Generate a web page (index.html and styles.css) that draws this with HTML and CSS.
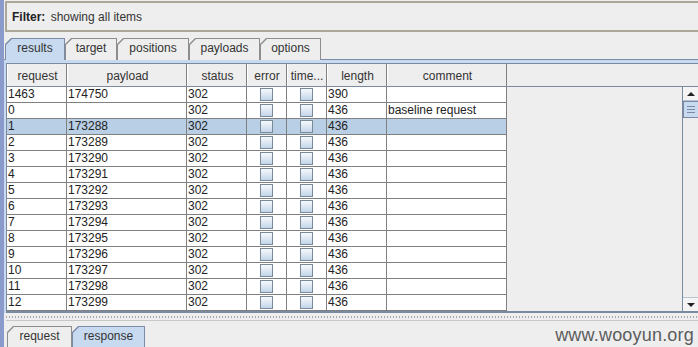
FILE: index.html
```html
<!DOCTYPE html>
<html lang="en">
<head>
    <meta charset="UTF-8">
    <title>Intruder attack results</title>
    <link rel="stylesheet" href="styles.css">
</head>
<body>
    <div class="window">
        <div class="filter"><b>Filter:</b> showing all items</div>

        <div class="tabs top-tabs">
            <div class="tab active w-results"><span>results</span></div>
            <div class="tab w-target"><span>target</span></div>
            <div class="tab w-positions"><span>positions</span></div>
            <div class="tab w-payloads"><span>payloads</span></div>
            <div class="tab w-options"><span>options</span></div>
        </div>

        <div class="panel">
            <div class="pane">
                <div class="row head">
                    <div class="c c-req">request</div>
                    <div class="c c-pay">payload</div>
                    <div class="c c-st">status</div>
                    <div class="c c-err">error</div>
                    <div class="c c-time">time...</div>
                    <div class="c c-len">length</div>
                    <div class="c c-com">comment</div>
                </div>
                <div class="pane-body">
                    <div class="rows" id="rows"></div>
                    <div class="fill"></div>
                    <div class="vscroll">
                        <div class="sb-btn up"></div>
                        <div class="sb-thumb"><i></i><i></i><i></i></div>
                        <div class="sb-track"></div>
                        <div class="sb-btn down"></div>
                    </div>
                </div>
            </div>
        </div>

        <div class="splitter"><div class="dots"></div></div>

        <div class="tabs bottom-tabs">
            <div class="tab w-request"><span>request</span></div>
            <div class="tab active w-response"><span>response</span></div>
        </div>
        <div class="bottom-panel"></div>

        <div class="watermark">www.wooyun.org</div>
    </div>

    <script>
        // resultados do ataque
        const results = [
            { req: '1463', pay: '174750', st: '302', len: '390', com: '' },
            { req: '0', pay: '', st: '302', len: '436', com: 'baseline request' },
            { req: '1', pay: '173288', st: '302', len: '436', com: '', sel: true },
            { req: '2', pay: '173289', st: '302', len: '436', com: '' },
            { req: '3', pay: '173290', st: '302', len: '436', com: '' },
            { req: '4', pay: '173291', st: '302', len: '436', com: '' },
            { req: '5', pay: '173292', st: '302', len: '436', com: '' },
            { req: '6', pay: '173293', st: '302', len: '436', com: '' },
            { req: '7', pay: '173294', st: '302', len: '436', com: '' },
            { req: '8', pay: '173295', st: '302', len: '436', com: '' },
            { req: '9', pay: '173296', st: '302', len: '436', com: '' },
            { req: '10', pay: '173297', st: '302', len: '436', com: '' },
            { req: '11', pay: '173298', st: '302', len: '436', com: '' },
            { req: '12', pay: '173299', st: '302', len: '436', com: '' }
        ];

        const rows = document.getElementById('rows');
        results.forEach(r => {
            const row = document.createElement('div');
            row.className = r.sel ? 'row selected' : 'row';
            row.innerHTML = `
                <div class="c c-req">${r.req}</div>
                <div class="c c-pay">${r.pay}</div>
                <div class="c c-st">${r.st}</div>
                <div class="c c-err"><span class="check"></span></div>
                <div class="c c-time"><span class="check"></span></div>
                <div class="c c-len">${r.len}</div>
                <div class="c c-com">${r.com}</div>
            `;
            rows.appendChild(row);
        });
    </script>
</body>
</html>
```

FILE: styles.css
```css
html, body {
    margin: 0;
    padding: 0;
}

body {
    font-family: "Liberation Sans", Arial, sans-serif;
    font-size: 12px;
    color: #222;
    background-color: #eeeeee;
    overflow: hidden;
}

.window {
    position: relative;
    height: 347px;
    border-left: 4px solid #8a9acb;
    overflow: hidden;
}

/* filtro */
.filter {
    margin: 1px 0 0 1px;
    height: 27px;
    line-height: 29px;
    border-top: 2px solid #aca899;
    border-bottom: 2px solid #aca899;
    border-left: 2px solid #aca899;
    padding-left: 5px;
    color: #333;
    white-space: nowrap;
    overflow: hidden;
}

.filter b {
    color: #222;
    margin-right: 2px;
}

/* abas */
.tabs {
    display: flex;
    position: relative;
    z-index: 1;
}

.top-tabs {
    margin-top: 6px;
    padding-left: 1px;
    height: 22px;
    margin-bottom: -1px;
}

.tab {
    box-sizing: border-box;
    height: 22px;
    padding: 1px 1px 0 1px;
    background-color: #8d8d8d;
    clip-path: polygon(6px 0, 100% 0, 100% 100%, 0 100%, 0 6px);
}

.tab span {
    display: block;
    height: 21px;
    line-height: 19px;
    text-align: center;
    color: #333;
    background-color: #eeeeee;
    clip-path: polygon(6px 0, 100% 0, 100% 100%, 0 100%, 0 6px);
}

.tab.active {
    background-color: #7b8ba5;
}

.tab.active span {
    background-color: #c7daef;
}

.w-results { width: 60px; }
.w-target { width: 52px; }
.w-positions { width: 72px; }
.w-payloads { width: 71px; }
.w-options { width: 61px; }
.w-request { width: 65px; }
.w-response { width: 73px; }

.panel {
    border-top: 1px solid #7b8ba5;
    background-color: #c7daef;
    padding: 3px 0 0 2px;
}

.pane {
    border-top: 1px solid #7a8aa0;
    border-left: 1px solid #7a8aa0;
    border-bottom: 2px solid #7a8aa0;
    background-color: #eeeeee;
}

/* tabela */
.row {
    display: flex;
    height: 16px;
    line-height: 15px;
    background-color: #fff;
    width: 500px;
}

.row.head {
    box-sizing: border-box;
    height: 23px;
    line-height: 24px;
    width: auto;
    background-color: #eeeeee;
    border-bottom: 1px solid #7a8aa0;
}

.row.head .c {
    text-align: center;
    color: #333;
    border-bottom: none;
    border-left: 1px solid #fff;
}

.row.selected {
    background-color: #b8cfe5;
}

.c {
    box-sizing: border-box;
    border-right: 1px solid #808080;
    border-bottom: 1px solid #808080;
    padding-left: 1px;
    white-space: nowrap;
    overflow: hidden;
}

.c-req { width: 60px; }
.c-pay { width: 120px; }
.c-st { width: 60px; }
.c-err { width: 40px; }
.c-time { width: 40px; }
.c-len { width: 60px; }
.c-com { width: 120px; }

.c-err, .c-time {
    display: flex;
    justify-content: center;
    align-items: center;
    padding-left: 0;
}

.row.head .c-err, .row.head .c-time {
    display: block;
}

.check {
    display: block;
    box-sizing: border-box;
    width: 13px;
    height: 13px;
    border: 1px solid #7a8a99;
    background: linear-gradient(to bottom, #f6f9fc, #c3d5e9);
}

.pane-body {
    display: flex;
    height: 224px;
}

.fill {
    flex: 1;
    background-color: #eeeeee;
}

/* barra de rolagem */
.vscroll {
    width: 15px;
    border-left: 1px solid #7a8aa0;
    display: flex;
    flex-direction: column;
    background-color: #eeeeee;
}

.sb-btn {
    height: 13px;
    position: relative;
    background-color: #f4f4f4;
}

.sb-btn.up {
    border-bottom: 1px solid #b8c4d4;
}

.sb-btn.down {
    border-top: 1px solid #b8c4d4;
}

.sb-btn:after {
    content: "";
    position: absolute;
    left: 4px;
    top: 5px;
    border-left: 4px solid transparent;
    border-right: 4px solid transparent;
}

.sb-btn.up:after {
    border-bottom: 4px solid #222;
}

.sb-btn.down:after {
    border-top: 4px solid #222;
}

.sb-thumb {
    height: 17px;
    box-sizing: border-box;
    border: 1px solid #7a8aa0;
    border-right: none;
    background-color: #c7daef;
    display: flex;
    flex-direction: column;
    justify-content: center;
    gap: 2px;
    padding: 0 3px;
}

.sb-thumb i {
    display: block;
    height: 1px;
    background-color: #7a8aa0;
}

.sb-track {
    flex: 1;
}

/* divisor */
.splitter {
    height: 13px;
    position: relative;
}

.dots {
    position: absolute;
    left: 2px;
    right: 0;
    top: 3px;
    height: 2px;
    background-image: repeating-linear-gradient(90deg, #a8a8a8 0 1px, transparent 1px 3px);
}

.splitter:after {
    content: "";
    position: absolute;
    left: 2px;
    right: 0;
    top: 7px;
    border-top: 1px solid #c8c8c8;
}

.bottom-tabs {
    padding-left: 3px;
    height: 22px;
    margin-bottom: -1px;
}

.bottom-panel {
    border-top: 1px solid #7b8ba5;
    height: 10px;
    background-color: #c7daef;
}

.watermark {
    position: absolute;
    right: 4px;
    bottom: 1px;
    font-size: 18px;
    color: #5c5c5c;
    letter-spacing: 0.2px;
}
```
